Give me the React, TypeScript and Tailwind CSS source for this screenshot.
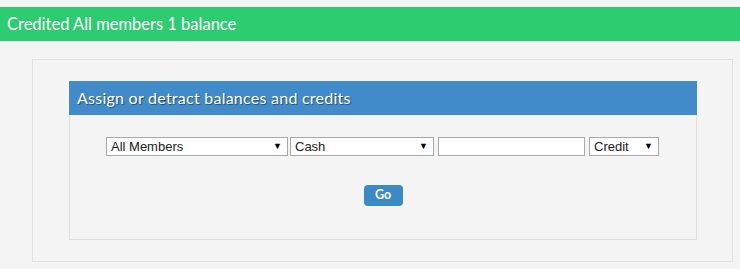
import React from "react";

function FakeSelect({ label, width }: { label: string; width: string }) {
  return (
    <div
      className={`${width} h-[19px] bg-white border border-[#a9a9a9] flex items-center justify-between pl-[4px] pr-[5px] text-[13px] leading-none text-[#222] [font-family:'Liberation_Sans',Arial,sans-serif]`}
    >
      <span>{label}</span>
      <span className="text-[9px] text-black">▼</span>
    </div>
  );
}

export default function App() {
  return (
    <div className="w-[740px] h-[269px] bg-[#f4f4f4] pt-[7px] overflow-hidden [font-family:Lato,'Noto_Sans',sans-serif]">
      <div className="h-[34px] bg-[#2ecc71] text-white text-[16.5px] flex items-center pl-[7px]">
        Credited All members 1 balance
      </div>
      <div className="ml-[32px] mt-[18px] w-[701px] h-[203px] border border-[#e2e2e2] pt-[21px] pl-[36px]">
        <div className="w-[628px]">
          <div className="h-[34px] bg-[#428bca] text-white text-[16px] tracking-[0.25px] flex items-center pl-[8px] [text-shadow:1px_1px_1px_rgba(0,0,0,0.45)]">
            Assign or detract balances and credits
          </div>
          <div className="h-[125px] border-x border-b border-[#dedede] pt-[22px] flex flex-col items-center">
            <div className="flex items-center -ml-[1px]">
              <FakeSelect label="All Members" width="w-[182px]" />
              <div className="w-[2px]" />
              <FakeSelect label="Cash" width="w-[144px]" />
              <div className="w-[4px]" />
              <div className="w-[147px] h-[19px] bg-white border border-[#a9a9a9]" />
              <div className="w-[4px]" />
              <FakeSelect label="Credit" width="w-[70px]" />
            </div>
            <div className="mt-[29px] w-[39px] h-[21px] rounded-[4px] bg-[#3b8ac6] text-white text-[12.5px] font-bold flex items-center justify-center">
              Go
            </div>
          </div>
        </div>
      </div>
    </div>
  );
}
